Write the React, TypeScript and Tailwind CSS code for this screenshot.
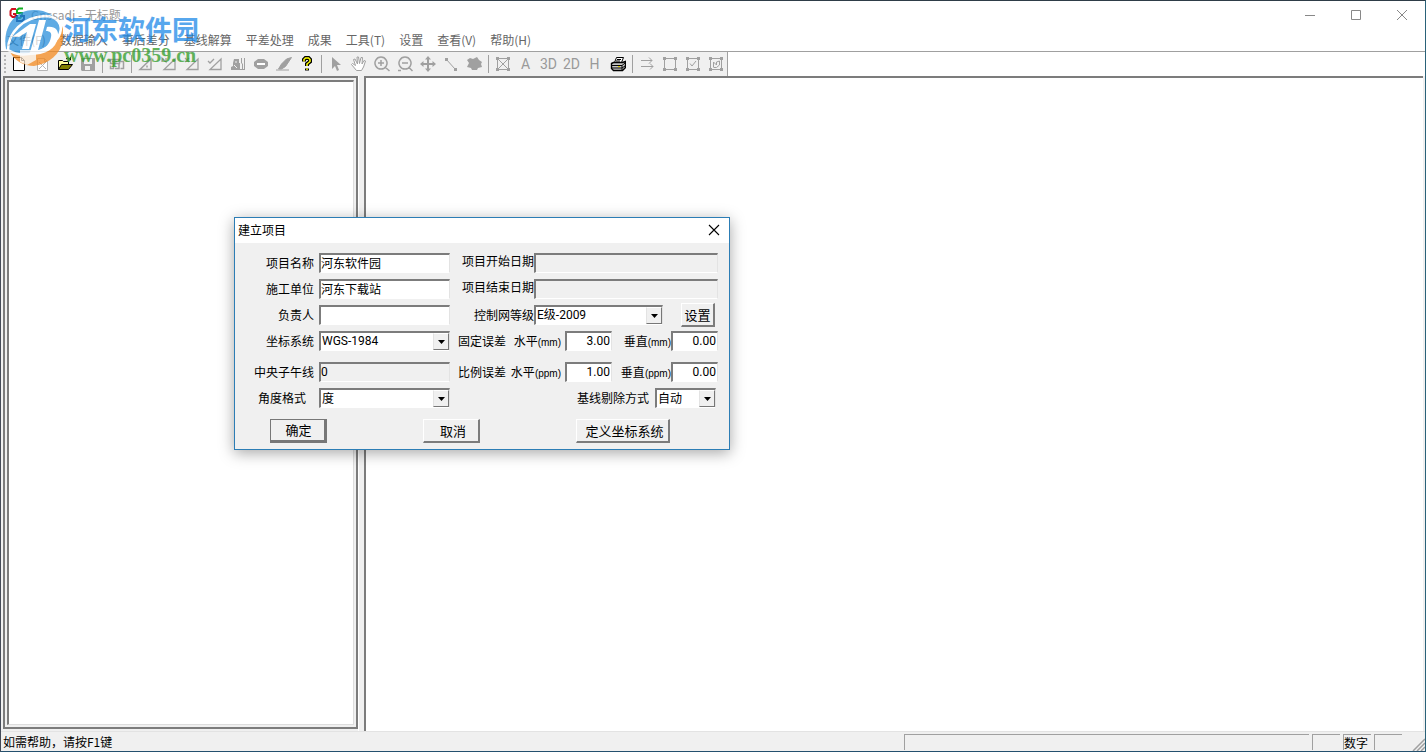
import { useState } from 'react'

const menus = [
  '文件(F)', '数据输入', '事后差分', '基线解算', '平差处理',
  '成果', '工具(T)', '设置', '查看(V)', '帮助(H)'
]

type Tool = {
  name: string
  icon?: React.ReactNode
  text?: string
}

const nodes = 'M1 1h3v3h-3zM12 1h3v3h-3zM1 12h3v3h-3zM12 12h3v3h-3z'

const tools: (Tool | null)[] = [
  {
    name: '新建',
    icon: <path d="M2.5 1.5h8l3 3v10h-11zM10.5 1.5v3h3" fill="#fff" stroke="#000" />
  },
  {
    name: '关闭',
    icon: <path d="M3.5 2.5h7l3 3v9h-10zM10.5 2.5v3h3M5 6l7 7M12 6l-7 7" fill="#fff" stroke="#b5b5b5" />
  },
  {
    name: '打开',
    icon: (
      <>
        <path d="M1.5 13.5v-9h4l1 1h5v3" fill="#ffff9c" stroke="#000" />
        <path d="M1.5 13.5l3-5h11l-4 5z" fill="#808000" stroke="#000" />
        <path d="M9 3q2-2.500 4 0M13.500 1v3h-3" fill="none" stroke="#000" />
      </>
    )
  },
  {
    name: '保存',
    icon: <path d="M1 2h14v13h-13l-1-1zM4 3v5h8v-5zM5 10v4h5v-4z" fill="#a0a0a0" fillRule="evenodd" />
  },
  null,
  {
    name: '导入数据',
    icon: <path d="M1.500 3.500h9v4h-9zM4.500 7.500v5h-3v-3M6 12.500h4v-5M10 5.500h4.500v7h-3M3 5.500h5" fill="none" stroke="#a0a0a0" strokeWidth="1.5" />
  },
  null,
  { name: '静态基线', icon: <path d="M2 13.500h11v-10.500zM9 9.500v2" fill="none" stroke="#a0a0a0" strokeWidth="1.500" /> },
  { name: '动态基线', icon: <path d="M3 13.500h11v-10.500zM1 6v-4l4 4v-4" fill="none" stroke="#a0a0a0" strokeWidth="1.300" /> },
  { name: '删除基线', icon: <path d="M3 13.500h11v-10.500zM1 2l4 4M5 2l-4 4" fill="none" stroke="#a0a0a0" strokeWidth="1.300" /> },
  { name: '检查基线', icon: <path d="M3 13.500h11v-10.500zM1 5l2 2 4-4" fill="none" stroke="#a0a0a0" strokeWidth="1.300" /> },
  {
    name: '处理',
    icon: (
      <>
        <path d="M3 7l1-4h5v4h1v7h-9v-3l2-1z" fill="#a0a0a0" />
        <path d="M4 9l3 3M6 5v2" stroke="#f0f0f0" />
        <path d="M11.500 2v5l1 1v5M14.500 2v12M10 13.500h5" fill="none" stroke="#a0a0a0" />
      </>
    )
  },
  {
    name: '停止',
    icon: (
      <>
        <path d="M5 3h6l4 3v4l-4 3h-6l-4-3v-4z" fill="#a0a0a0" />
        <path d="M4 7h8v2h-8z" fill="#fff" />
      </>
    )
  },
  {
    name: '编辑',
    icon: <path d="M15.500 1.500l-6 9-4 2.500-3 0 3-5 5-5zM0 14h13" fill="#a0a0a0" stroke="#a0a0a0" />
  },
  {
    name: '帮助',
    icon: (
      <>
        <path d="M5 5.500v-2l1.500-1.500h3l1.500 1.500v2l-3 2.500v2M8 12.500v2" fill="none" stroke="#000" strokeWidth="4" />
        <path d="M5 5.500v-2l1.500-1.500h3l1.500 1.500v2l-3 2.500v2M8 12.500v1.500" fill="none" stroke="#ffff00" strokeWidth="1.500" />
      </>
    )
  },
  null,
  { name: '选择', icon: <path d="M4 1v12l3-3 2 5 2-1-2-5h4z" fill="#a0a0a0" /> },
  {
    name: '移动视图',
    icon: <path d="M5.500 14.500l-5-6 1-1 3 2-2-6 1.500-.5 2.500 5-.5-7h1.500l1 6.500 1.500-6h1.500l-.5 6.500 2-3.500 1.500.5-2 6-2 3.500z" fill="#fff" stroke="#a0a0a0" />
  },
  {
    name: '放大',
    icon: <path d="M7 1a6 6 0 1 0 .01 0zM11.500 11.500l4 3.500M4 7h6M7 4v6" fill="none" stroke="#a0a0a0" strokeWidth="1.500" />
  },
  {
    name: '缩小',
    icon: <path d="M8 1a6 6 0 1 0 .01 0zM12 11.500l3.500 3.500M5 7h6M1 14.500h3" fill="none" stroke="#a0a0a0" strokeWidth="1.500" />
  },
  {
    name: '全图',
    icon: <path d="M8 0l3 3.500h-2v3.500h3.500v-2l3.500 3-3.500 3v-2h-3.500v3.500h2l-3 3.500-3-3.500h2v-3.500h-3.500v2l-3.500-3 3.500-3v2h3.500v-3.500h-2z" fill="#a0a0a0" />
  },
  {
    name: '测距',
    icon: (
      <>
        <path d="M2 2h3v3h-3zM11 12h3v3h-3z" fill="#a0a0a0" />
        <path d="M3 3l9 10" stroke="#a0a0a0" />
      </>
    )
  },
  { name: '测面', icon: <path d="M1 4l3-2 3 1 4-2 2 3 3 2-1 2 1 3-4 1-1 2h-5l-1-2-4-1 2-4z" fill="#a0a0a0" /> },
  null,
  {
    name: '网图',
    icon: (
      <>
        <path d={nodes} fill="#a0a0a0" />
        <path d="M2.500 2.500h11v11h-11zM2.500 2.500l11 11M13.500 2.500l-11 11" fill="none" stroke="#a0a0a0" />
      </>
    )
  },
  { name: '注记', text: 'A' },
  { name: '三维', text: '3D' },
  { name: '二维', text: '2D' },
  { name: '高程', text: 'H' },
  {
    name: '打印',
    icon: (
      <>
        <path d="M4.500 6.500l2-5h7l-2 5z" fill="#fff" stroke="#000" />
        <path d="M1.500 7.500l2-1h9l3-1v6l-3 3h-9l-2-2z" fill="#c8c8c8" stroke="#000" strokeWidth="1.400" />
        <path d="M2 9.500h10l3-2.500M2 12h10l3-2M12 9.500v5M7 3.500h4M6 5h4" fill="none" stroke="#000" />
        <path d="M8 10.500h2" stroke="#e0d000" />
      </>
    )
  },
  null,
  { name: '下一步', icon: <path d="M2 4.500h11M2 10.500h12M10 1.500l3 3-3 3M11 7.500l3 3-3 3" fill="none" stroke="#a0a0a0" /> },
  {
    name: '框选',
    icon: (
      <>
        <path d={nodes} fill="#a0a0a0" />
        <path d="M2.500 2.500h11v11h-11z" fill="none" stroke="#a0a0a0" />
      </>
    )
  },
  {
    name: '确认选择',
    icon: (
      <>
        <path d={nodes} fill="#a0a0a0" />
        <path d="M2.500 2.500h11v11h-11zM5 7.500l2 2.500 4-5" fill="none" stroke="#a0a0a0" />
      </>
    )
  },
  {
    name: '重新选择',
    icon: (
      <>
        <path d={nodes} fill="#a0a0a0" />
        <path d="M2.500 2.500h11v11h-11zM5.500 11v-5l3 3v-3l3-1v4l-3 2.500h-3" fill="none" stroke="#a0a0a0" />
      </>
    )
  }
]

const sunken = 'border-t-2 border-l-2 border-r border-b border-t-[#7c7c7c] border-l-[#7c7c7c] border-r-[#e3e3e3] border-b-[#fff]'
const raised = 'border-t border-l border-r-2 border-b-2 border-t-white border-l-white border-r-[#7c7c7c] border-b-[#7c7c7c]'

function Field({ id, value, className, disabled }: { id: string; value?: string; className: string; disabled?: boolean }) {
  const [text, setText] = useState(value ?? '')
  return (
    <input
      id={id}
      type="text"
      value={text}
      onChange={e => setText(e.target.value)}
      disabled={disabled}
      className={`h-5 min-w-0 pr-px pb-0.5 leading-4 text-black outline-none ${sunken} ${disabled ? 'bg-[#f0f0f0]' : 'bg-white'} ${className}`}
    />
  )
}

function Combo({ id, options, className }: { id: string; options: string[]; className: string }) {
  return (
    <span className={`relative flex h-5 bg-white ${sunken} ${className}`}>
      <select id={id} className="w-full appearance-none bg-transparent pb-px pl-px leading-4 text-black outline-none">
        {options.map(o => <option key={o}>{o}</option>)}
      </select>
      <span className="pointer-events-none absolute top-0 right-0 flex h-full w-4 items-center justify-center border-t border-r border-b border-l border-t-white border-r-[#777] border-b-[#777] border-l-[#e3e3e3] bg-[#f0f0f0]">
        <svg width="7" height="4" viewBox="0 0 7 4"><path d="M0 0h7l-3.500 4z" fill="#000" /></svg>
      </span>
    </span>
  )
}

function ProjectDialog({ onClose }: { onClose: () => void }) {
  return (
    <div role="dialog" aria-label="建立项目" className="absolute top-[216px] left-[233px] w-[496px] border border-[#2c7db5] bg-[#f0f0f0] text-xs text-black shadow-[0_3px_14px_rgba(0,0,0,0.35)]">
      <div className="flex h-[25px] items-center justify-between bg-white pr-2 pb-0.5 pl-[3px]">
        <h2>建立项目</h2>
        <button aria-label="关闭" onClick={onClose} className="flex h-5 w-3.5 items-center justify-center">
          <svg width="12" height="12" viewBox="0 0 12 12"><path d="M1 1l10 10M11 1L1 11" stroke="#000" strokeWidth="1.100" /></svg>
        </button>
      </div>

      <div className="flex gap-2 pt-[10px] pr-[11px] whitespace-nowrap">
        <div className="flex w-[215px] flex-col gap-1.5">
          <div className="flex h-5 items-center gap-[5px]">
            <label htmlFor="name" className="w-[79px] text-right">项目名称</label>
            <Field id="name" value="河东软件园" className="flex-1" />
          </div>
          <div className="flex h-5 items-center gap-[5px]">
            <label htmlFor="unit" className="w-[79px] text-right">施工单位</label>
            <Field id="unit" value="河东下载站" className="flex-1" />
          </div>
          <div className="flex h-5 items-center gap-[5px]">
            <label htmlFor="owner" className="w-[79px] text-right">负责人</label>
            <Field id="owner" className="flex-1" />
          </div>
          <div className="flex h-5 items-center gap-[5px]">
            <label htmlFor="system" className="w-[79px] text-right">坐标系统</label>
            <Combo id="system" options={['WGS-1984']} className="flex-1 font-[Roboto,'Noto_Sans_CJK_SC',sans-serif]" />
          </div>
          <div className="mt-[5px] flex h-5 items-center gap-[5px]">
            <label htmlFor="meridian" className="w-[79px] text-right">中央子午线</label>
            <Field id="meridian" value="0" disabled className="flex-1 font-[Roboto,sans-serif]" />
          </div>
          <div className="flex h-5 items-center gap-[5px]">
            <label htmlFor="angle" className="w-[79px] pr-2 text-right">角度格式</label>
            <Combo id="angle" options={['度', '度分秒']} className="flex-1" />
          </div>
        </div>

        <div className="flex flex-1 flex-col gap-1.5">
          <div className="flex h-5 items-center">
            <label htmlFor="start" className="w-[76px] pb-1 text-right">项目开始日期</label>
            <Field id="start" disabled className="flex-1" />
          </div>
          <div className="flex h-5 items-center">
            <label htmlFor="end" className="w-[76px] pb-1 text-right">项目结束日期</label>
            <Field id="end" disabled className="flex-1" />
          </div>
          <div className="flex h-5 items-center">
            <label htmlFor="level" className="w-[76px] text-right">控制网等级</label>
            <Combo id="level" options={['E级-2009', 'D级-2009', 'C级-2009']} className="w-[129px] font-[Roboto,'Noto_Sans_CJK_SC',sans-serif]" />
            <button className={`mr-[3px] ml-auto h-6 w-[34px] text-[13px] ${raised}`}>设置</button>
          </div>
          <div className="flex h-5 items-center">
            <span className="w-12">固定误差</span>
            <label htmlFor="fixed-h" className="mr-1 w-[55px] text-right">水平<Unit>(mm)</Unit></label>
            <Field id="fixed-h" value="3.00" className="w-[47px] text-right font-[Roboto,sans-serif]" />
            <label htmlFor="fixed-v" className="w-[59px] text-right">垂直<Unit>(mm)</Unit></label>
            <Field id="fixed-v" value="0.00" className="w-[47px] text-right font-[Roboto,sans-serif]" />
          </div>
          <div className="mt-[5px] flex h-5 items-center">
            <span className="w-12">比例误差</span>
            <label htmlFor="ratio-h" className="mr-1 w-[55px] text-right">水平<Unit>(ppm)</Unit></label>
            <Field id="ratio-h" value="1.00" className="w-[47px] text-right font-[Roboto,sans-serif]" />
            <label htmlFor="ratio-v" className="w-[59px] text-right">垂直<Unit>(ppm)</Unit></label>
            <Field id="ratio-v" value="0.00" className="w-[47px] text-right font-[Roboto,sans-serif]" />
          </div>
          <div className="flex h-5 items-center justify-end gap-1.5 pr-0.5">
            <label htmlFor="reject">基线剔除方式</label>
            <Combo id="reject" options={['自动', '手动']} className="w-[61px]" />
          </div>
        </div>
      </div>

      <div className="flex justify-between pt-[11px] pr-[59px] pb-1.5 pl-[35px] text-[13px]">
        <button onClick={onClose} className="h-6 w-[57px] border-t border-r-[3px] border-b-[3px] border-l border-[#777] pl-0.5">确定</button>
        <button onClick={onClose} className={`h-6 w-[57px] pl-1 ${raised}`}>取消</button>
        <button className={`h-6 w-[94px] overflow-hidden pl-1 whitespace-nowrap ${raised}`}>定义坐标系统</button>
      </div>
    </div>
  )
}

function Unit({ children }: { children: React.ReactNode }) {
  return <span className="font-[Liberation_Sans,sans-serif] text-[10px]">{children}</span>
}

function Watermark() {
  return (
    <div className="pointer-events-none absolute top-1.5 left-0.5 flex gap-px opacity-75">
      <svg width="60" height="60" viewBox="0 0 60 60">
        <path d="M3 42C-1 20 12 3 31 3c13 0 22 6 26 16 2 14-10 24-22 27-12 3-24 2-32-4z" fill="#2a90dc" />
        <path d="M60 19c4 20-8 37-29 40-10 0-19-5-24-14 20 8 46-2 53-26z" fill="#f58a1f" />
        <path d="M5 43C5 26 20 10 42 9c12 0 18 8 15 17C52 42 22 54 5 43z" fill="none" stroke="#fff" strokeWidth="2.500" />
        <path d="M9 30l18-13h6l-7 25h-7l5-17-8 5z" fill="#fff" />
        <path d="M36 13h7l-8 30c8-1 12-7 13-13 1-4-1-6-5-6l1-4c8-1 12 3 11 10-2 12-12 18-29 18l2-6z" fill="#fff" />
        <path d="M17 43h16v10l-9 5-7-3z" fill="#fff" opacity=".8" />
      </svg>
      <div className="flex flex-col pt-1.5 whitespace-nowrap">
        <span className="text-[27px] leading-8 font-bold text-[#1f8ae8]">河东软件园</span>
        <span className="font-[Liberation_Serif,serif] text-[20px] leading-5 font-bold text-[#2f9c28]">www.pc0359.cn</span>
      </div>
    </div>
  )
}

export default function App() {
  const [open, setOpen] = useState(true)

  return (
    <div className="relative flex h-screen flex-col overflow-hidden border border-t-[#2e3d48] border-r-[#2a6279] border-b-[#24506e] border-l-[#454b58] bg-white font-['Noto_Sans_CJK_SC',sans-serif] text-xs leading-4">
      <header className="flex h-7 shrink-0 items-center justify-between pr-4 pl-2 text-[#999]">
        <div className="flex items-center gap-1">
          <svg width="18" height="16" viewBox="0 0 18 16" fill="none">
            <path d="M7 2H3L1.500 4v4l2 2h3V7H4" stroke="#d01020" strokeWidth="2" />
            <path d="M14 1.500h-4L8 3v3h5v3l-2 2H8" stroke="#10b020" strokeWidth="2" />
            <path d="M8 8v6h5l2-2V9h-4" stroke="#102060" strokeWidth="2" />
          </svg>
          <h1>Gnssadj - 无标题</h1>
        </div>
        <div className="flex gap-[31px]">
          <button aria-label="最小化" className="flex size-[15px] items-center justify-center">
            <svg width="12" height="12" viewBox="0 0 12 12"><path d="M1 6.500h10" stroke="#888" /></svg>
          </button>
          <button aria-label="最大化" className="flex size-[15px] items-center justify-center">
            <svg width="12" height="12" viewBox="0 0 12 12"><path d="M1.500 1.500h9v9h-9z" fill="none" stroke="#888" /></svg>
          </button>
          <button aria-label="关闭" className="flex size-[15px] items-center justify-center">
            <svg width="12" height="12" viewBox="0 0 12 12"><path d="M1 1l10 10M11 1L1 11" stroke="#888" /></svg>
          </button>
        </div>
      </header>

      <nav className="flex h-[22px] shrink-0 items-center gap-3.5 pb-px pl-1.5 text-[#666]">
        {menus.map(m => <button key={m} className="whitespace-nowrap">{m}</button>)}
      </nav>

      <div className="flex h-[25px] shrink-0 border-t border-[#a0a0a0]">
        <div role="toolbar" className="flex items-center border-r border-[#a0a0a0] bg-[#f0f0f0] pb-px">
          <span className="mr-px ml-[3px] h-[18px] w-0.5 border-l-2 border-dotted border-[#b5b5b5]" />
          {tools.map((t, i) => t ? (
            <button key={t.name} aria-label={t.name} className="flex h-full w-[23px] items-center justify-center font-[Roboto,sans-serif] text-sm text-[#999]">
              {t.icon ? <svg width="16" height="16" viewBox="0 0 16 16">{t.icon}</svg> : t.text}
            </button>
          ) : (
            <span key={i} className="flex h-[18px] w-1.5 justify-center">
              <span className="w-px bg-[#a0a0a0]" />
            </span>
          ))}
        </div>
      </div>

      <main className="flex min-h-0 flex-1 bg-[#f0f0f0]">
        <aside className="mb-0.5 ml-0.5 flex w-[27%] max-w-[355px] shrink-0 border-2 border-[#7c7c7c] bg-[#f0f0f0] p-0.5">
          <div className="flex-1 border-t-2 border-r border-b border-l-2 border-t-[#7c7c7c] border-r-[#ddd] border-b-[#ddd] border-l-[#7c7c7c] bg-white" />
        </aside>
        <div className="w-1.5 shrink-0 border-l border-white" />
        <section className="mr-0.5 flex-1 border-t-2 border-l-2 border-[#7c7c7c] bg-white" />
      </main>

      <footer className="flex h-5 shrink-0 items-center gap-[3px] border-t border-[#e3e3e3] bg-[#f0f0f0] pl-0.5 text-black">
        <p className="flex-1">如需帮助，请按F1键</p>
        <span className="h-4 w-[405px] border-t border-l border-[#a0a0a0]" />
        <span className="h-4 w-7 border-t border-l border-[#a0a0a0]" />
        <span className="h-4 w-7 border-t border-l border-[#a0a0a0] leading-[15px]">数字</span>
        <span className="h-4 w-7 border-t border-l border-[#a0a0a0]" />
        <svg width="20" height="16" viewBox="0 0 20 16" className="self-end">
          <path d="M8 16L20 4M12 16l8-8M16 16l4-4" stroke="#a0a0a0" strokeWidth="1.500" />
        </svg>
      </footer>

      <Watermark />
      {open && <ProjectDialog onClose={() => setOpen(false)} />}
    </div>
  )
}
